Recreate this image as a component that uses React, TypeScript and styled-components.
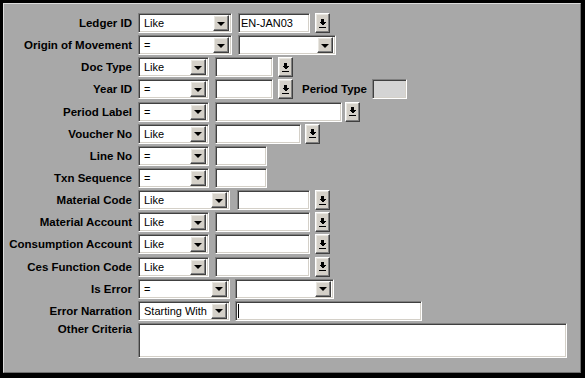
import styled, {createGlobalStyle} from "styled-components";

const GlobalStyle = createGlobalStyle`
  html, body {
    margin: 0;
    padding: 0;
    background: #000;
  }
  * {
    box-sizing: border-box;
  }
`

const Frame = styled.div`
  width: 585px;
  height: 378px;
  background: #000;
  padding: 3px 4px 5px 3px;
  font-family: "Liberation Sans", Arial, sans-serif;
`

const Panel = styled.div`
  width: 100%;
  height: 100%;
  background: #a8a8a8;
  border: 1px solid;
  border-color: #dcdcdc #707070 #707070 #dcdcdc;
  padding-top: 9px;
  display: flex;
  flex-direction: column;
  gap: 2.15px;
`

const Row = styled.div<{ $top?: boolean }>`
  display: flex;
  align-items: ${p => p.$top ? 'flex-start' : 'center'};
  height: ${p => p.$top ? 'auto' : '20px'};
`

const Label = styled.div<{ $top?: boolean }>`
  width: 129px;
  flex: none;
  text-align: right;
  padding-right: 1px;
  font-size: 11.5px;
  font-weight: bold;
  color: #000;
  white-space: nowrap;
  line-height: ${p => p.$top ? '13px' : '20px'};
`

const InlineLabel = styled.div<{ $ml: number }>`
  margin-left: ${p => p.$ml}px;
  font-size: 11.5px;
  font-weight: bold;
  white-space: nowrap;
  line-height: 20px;
`

const sunken = `
  border: 1px solid;
  border-color: #808080 #ffffff #ffffff #808080;
  box-shadow: inset 1px 1px #404040, inset -1px -1px #d4d0c8;
`

const raised = `
  border: 1px solid;
  border-color: #ffffff #404040 #404040 #ffffff;
  box-shadow: inset -1px -1px #808080, inset 1px 1px #e8e6e0;
  background: #d4d0c8;
`

const Select = styled.div<{ $w: number; $ml: number }>`
  ${sunken};
  background: #fff;
  width: ${p => p.$w}px;
  margin-left: ${p => p.$ml}px;
  height: 20px;
  flex: none;
  display: flex;
  align-items: center;
  padding: 2px;
  font-size: 11px;
  color: #000;
`

const SelectText = styled.span`
  flex: 1;
  padding-left: 3px;
  white-space: nowrap;
  overflow: hidden;
  line-height: 16px;
`

const ArrowBtn = styled.div`
  ${raised};
  width: 16px;
  height: 16px;
  flex: none;
  display: flex;
  align-items: center;
  justify-content: center;
`

const Arrow = styled.div`
  width: 0;
  height: 0;
  border-left: 4px solid transparent;
  border-right: 4px solid transparent;
  border-top: 4px solid #000;
  margin-top: 1px;
`

const TextField = styled.div<{ $w: number; $ml: number; $h?: number; $disabled?: boolean }>`
  ${sunken};
  background: ${p => p.$disabled ? '#d4d4d4' : '#fff'};
  width: ${p => p.$w}px;
  margin-left: ${p => p.$ml}px;
  height: ${p => p.$h ?? 20}px;
  flex: none;
  padding: 1px 2px;
  font-size: 11px;
  line-height: 16px;
  white-space: nowrap;
  display: flex;
`

const Caret = styled.span`
  display: block;
  width: 1px;
  height: 14px;
  margin-top: 1px;
  background: #000;
`

const LookupBtn = styled.div<{ $ml: number }>`
  ${raised};
  width: 15px;
  height: 20px;
  margin-left: ${p => p.$ml}px;
  flex: none;
  display: flex;
  align-items: center;
  justify-content: center;
`

const LookupIcon = () => (
  <svg width="7" height="9" viewBox="0 0 7 9" shapeRendering="crispEdges">
    <rect x="2" y="0" width="3" height="3" fill="#000"/>
    <polygon points="0,3 7,3 3.5,6.5" fill="#000"/>
    <rect x="0" y="8" width="7" height="1" fill="#000"/>
  </svg>
)

const Combo = ({w, ml = 5, value = ''}: { w: number; ml?: number; value?: string }) => (
  <Select $w={w} $ml={ml}>
    <SelectText>{value}</SelectText>
    <ArrowBtn><Arrow/></ArrowBtn>
  </Select>
)

const Lookup = ({ml}: { ml: number }) => (
  <LookupBtn $ml={ml}><LookupIcon/></LookupBtn>
)

export default function App() {
  return <>
    <GlobalStyle/>
    <Frame>
      <Panel>
        <Row>
          <Label>Ledger ID</Label>
          <Combo w={94} value="Like"/>
          <TextField $w={72} $ml={6}>EN-JAN03</TextField>
          <Lookup ml={5}/>
        </Row>
        <Row>
          <Label>Origin of Movement</Label>
          <Combo w={94} value="="/>
          <Combo w={98} ml={6}/>
        </Row>
        <Row>
          <Label>Doc Type</Label>
          <Combo w={71} value="Like"/>
          <TextField $w={58} $ml={6}/>
          <Lookup ml={5}/>
        </Row>
        <Row>
          <Label>Year ID</Label>
          <Combo w={71} value="="/>
          <TextField $w={58} $ml={6}/>
          <Lookup ml={5}/>
          <InlineLabel $ml={9}>Period Type</InlineLabel>
          <TextField $w={35} $ml={5} $disabled/>
        </Row>
        <Row>
          <Label>Period Label</Label>
          <Combo w={71} value="="/>
          <TextField $w={127} $ml={6}/>
          <Lookup ml={3}/>
        </Row>
        <Row>
          <Label>Voucher No</Label>
          <Combo w={71} value="Like"/>
          <TextField $w={86} $ml={6}/>
          <Lookup ml={4}/>
        </Row>
        <Row>
          <Label>Line No</Label>
          <Combo w={71} value="="/>
          <TextField $w={52} $ml={6}/>
        </Row>
        <Row>
          <Label>Txn Sequence</Label>
          <Combo w={71} value="="/>
          <TextField $w={52} $ml={6}/>
        </Row>
        <Row>
          <Label>Material Code</Label>
          <Combo w={92} value="Like"/>
          <TextField $w={73} $ml={7}/>
          <Lookup ml={5}/>
        </Row>
        <Row>
          <Label>Material Account</Label>
          <Combo w={71} value="Like"/>
          <TextField $w={95} $ml={6}/>
          <Lookup ml={5}/>
        </Row>
        <Row>
          <Label>Consumption Account</Label>
          <Combo w={71} value="Like"/>
          <TextField $w={95} $ml={6}/>
          <Lookup ml={5}/>
        </Row>
        <Row>
          <Label>Ces Function Code</Label>
          <Combo w={71} value="Like"/>
          <TextField $w={95} $ml={6}/>
          <Lookup ml={5}/>
        </Row>
        <Row>
          <Label>Is Error</Label>
          <Combo w={92} value="="/>
          <Combo w={99} ml={5}/>
        </Row>
        <Row>
          <Label>Error Narration</Label>
          <Combo w={92} value="Starting With"/>
          <TextField $w={187} $ml={5}><Caret/></TextField>
        </Row>
        <Row $top>
          <Label $top>Other Criteria</Label>
          <TextField $w={429} $ml={5} $h={35}/>
        </Row>
      </Panel>
    </Frame>
  </>
}
